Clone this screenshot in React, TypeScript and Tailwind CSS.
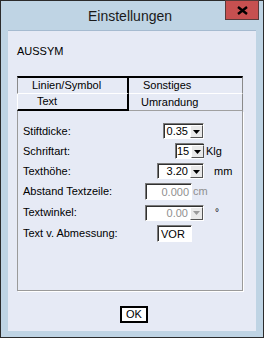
import React from "react";

const font = { fontFamily: '"Liberation Sans", Arial, sans-serif' };

const Arrow = ({ disabled }: { disabled?: boolean }) => (
  <svg width="7" height="4" viewBox="0 0 7 4">
    <path d="M0 0h7L3.5 4z" fill={disabled ? "#9a9a9a" : "#000"} />
  </svg>
);

const Combo = ({
  value,
  width,
  disabled,
}: {
  value: string;
  width: string;
  disabled?: boolean;
}) => (
  <div
    className={`${width} h-[16px] flex border border-t-[#7a7a7a] border-l-[#7a7a7a] border-b-white border-r-white`}
  >
    <div className="flex-1 flex border-t border-l border-t-[#303030] border-l-[#303030] bg-white">
      <span
        className={`flex-1 text-right pr-[2px] leading-[13px] ${disabled ? "text-[#8f8f8f]" : "text-black"}`}
      >
        {value}
      </span>
      <div className="w-[13px] flex items-center justify-center bg-[#e9e9e9] border border-t-white border-l-white border-b-[#555] border-r-[#555]">
        <Arrow disabled={disabled} />
      </div>
    </div>
  </div>
);

const Field = ({
  value,
  width,
  disabled,
  left,
}: {
  value: string;
  width: string;
  disabled?: boolean;
  left?: boolean;
}) => (
  <div
    className={`${width} h-[17px] flex border border-t-[#7a7a7a] border-l-[#7a7a7a] border-b-white border-r-white`}
  >
    <div
      className={`flex-1 border-t border-l border-t-[#303030] border-l-[#303030] bg-white leading-[14px] px-[2px] ${left ? "text-left" : "text-right"} ${disabled ? "text-[#8f8f8f]" : "text-black"}`}
    >
      {value}
    </div>
  </div>
);

export default function App() {
  return (
    <div
      className="w-[264px] h-[338px] flex flex-col border border-[#2b2b2b] bg-[#bfd4e4] text-[11px] text-black"
      style={font}
    >
      {/* Title bar */}
      <div className="h-[29px] flex">
        <div className="flex-1" />
        <div className="text-[14px] text-[#1a1a1a] leading-[29px] pt-[1px]">Einstellungen</div>
        <div className="flex-1 flex justify-end pr-[4px]">
          <div className="w-[34px] h-[20px] mt-[-1px] bg-[#c75050] border border-[#5a3a3a] flex items-center justify-center">
            <svg width="11" height="9" viewBox="0 0 11 9">
              <path d="M1 1l9 7M10 1L1 8" stroke="#000" strokeWidth="2.4" />
            </svg>
          </div>
        </div>
      </div>

      {/* Client area */}
      <div className="ml-[7px] w-[248px] h-[301px] bg-[#e6eaf5] border-t border-[#a6bbd0] flex flex-col">
        <div className="pl-[9px] pt-[14px] leading-[13px]">AUSSYM</div>

        <div className="ml-[9px] mt-[18px] w-[226px] flex flex-col">
          {/* Tabs row 1 */}
          <div className="flex h-[18px]">
            <div className="w-[112px] pl-[14px] border-t-2 border-l border-r-2 border-t-black border-l-[#8a8a8a] border-r-black border-b border-b-white flex items-center">
              Linien/Symbol
            </div>
            <div className="flex-1 pl-[14px] border-t-2 border-t-black border-r border-r-[#8a8a8a] border-b border-b-white flex items-center">
              Sonstiges
            </div>
          </div>
          {/* Tabs row 2 */}
          <div className="flex h-[17px]">
            <div className="w-[112px] pl-[19px] border-l border-l-white border-r-2 border-r-black border-b-2 border-b-black flex items-center">
              Text
            </div>
            <div className="flex-1 pl-[12px] border-r border-r-[#8a8a8a] border-b border-b-[#a0a0a0] flex items-center">
              Umrandung
            </div>
          </div>

          {/* Panel */}
          <div className="h-[180px] border-l border-r border-b border-[#9a9a9a] shadow-[1px_1px_0_#ffffff] pl-[5px] pt-[10px] flex flex-col">
            <div className="h-[20px] flex items-center">
              <span className="w-[122px]">Stiftdicke:</span>
              <div className="ml-[18px]">
                <Combo value="0.35" width="w-[41px]" />
              </div>
            </div>
            <div className="h-[20px] flex items-center">
              <span className="w-[122px]">Schriftart:</span>
              <div className="ml-[30px]">
                <Combo value="15" width="w-[29px]" />
              </div>
              <span className="ml-[2px]">Klg</span>
            </div>
            <div className="h-[20px] flex items-center">
              <span className="w-[122px]">Texthöhe:</span>
              <div className="ml-[12px]">
                <Combo value="3.20" width="w-[47px]" />
              </div>
              <span className="ml-[10px]">mm</span>
            </div>
            <div className="h-[21px] flex items-center">
              <span className="w-[122px]">Abstand Textzeile:</span>
              <Field value="0.000" width="w-[47px]" disabled />
              <span className="ml-[1px] text-[#8f8f8f]">cm</span>
            </div>
            <div className="h-[21px] flex items-center">
              <span className="w-[122px]">Textwinkel:</span>
              <Combo value="0.00" width="w-[59px]" disabled />
              <span className="ml-[11px] text-[10px] leading-[10px]">°</span>
            </div>
            <div className="h-[21px] flex items-center">
              <span className="w-[122px]">Text v. Abmessung:</span>
              <div className="ml-[12px]">
                <Field value="VOR" width="w-[35px]" left />
              </div>
            </div>
          </div>
        </div>

        {/* OK button */}
        <div className="mt-[15px] ml-[112px] w-[28px] h-[17px] border-2 border-black bg-white flex items-center justify-center">
          <span className="leading-[11px]">OK</span>
        </div>
      </div>
    </div>
  );
}
